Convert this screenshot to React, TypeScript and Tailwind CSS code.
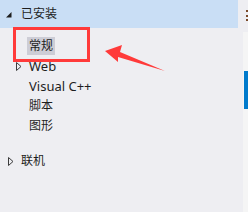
import React from "react";

const font = { fontFamily: '"Noto Sans", "Noto Sans CJK SC", sans-serif' };

function Hollow() {
  return (
    <svg width="6" height="9" viewBox="0 0 6 9" className="shrink-0">
      <polygon points="0.5,0.5 5,4.5 0.5,8.5" fill="none" stroke="#3c3c3c" strokeWidth="1" />
    </svg>
  );
}

export default function App() {
  return (
    <div
      className="relative w-[248px] h-[212px] overflow-hidden bg-[#eeeef2] flex text-[12px] text-[#1e1e1e] leading-none"
      style={font}
    >
      <div className="w-[238px] flex flex-col">
        <div className="h-[28px] bg-[#c9def5] flex items-center">
          <svg width="6" height="6" viewBox="0 0 6 6" className="ml-[6px] mt-[2px]">
            <polygon points="5.5,0 5.5,5.5 0,5.5" fill="#1e1e1e" />
          </svg>
          <span className="ml-[9px]">已安装</span>
        </div>
        <div className="h-[8px]" />
        <div className="h-[20px] flex items-center pl-[27px]">
          <span className="bg-[#cdcdd6] h-[18px] px-[2px] flex items-center">常规</span>
        </div>
        <div className="h-[20px] flex items-center pl-[16px]">
          <Hollow />
          <span className="ml-[7px] text-[13px]">Web</span>
        </div>
        <div className="h-[20px] flex items-center pl-[29px] text-[13px]">Visual C++</div>
        <div className="h-[20px] flex items-center pl-[29px]">脚本</div>
        <div className="h-[20px] flex items-center pl-[29px]">图形</div>
        <div className="h-[15px]" />
        <div className="h-[20px] flex items-center pl-[8px]">
          <Hollow />
          <span className="ml-[7px]">联机</span>
        </div>
      </div>
      <div className="flex-1 flex flex-col">
        <div className="h-[32px] relative">
          <div className="absolute left-[8px] top-[10px] w-[2px] h-[2px] bg-[#7a4a2a]" />
          <div className="absolute left-[8px] top-[15px] w-[2px] h-[2px] bg-[#7a4a2a]" />
          <div className="absolute left-[8px] top-[19px] w-[2px] h-[2px] bg-[#7a4a2a]" />
        </div>
        <div className="flex-1 ml-[5px] bg-[#f5f5f5] flex flex-col">
          <div className="h-[39px]" />
          <div className="h-[38px] ml-[1px] bg-[#007acc]" />
        </div>
      </div>

      <div className="absolute left-[13px] top-[27px] w-[77px] h-[35px] border-[3px] border-[#ff3a3a]" />
      <svg className="absolute left-0 top-0" width="248" height="212" viewBox="0 0 248 212">
        <polygon
          points="105,51 122,45 120,52 165,71 118,57 118,62"
          fill="#ff3a3a"
        />
      </svg>
    </div>
  );
}
